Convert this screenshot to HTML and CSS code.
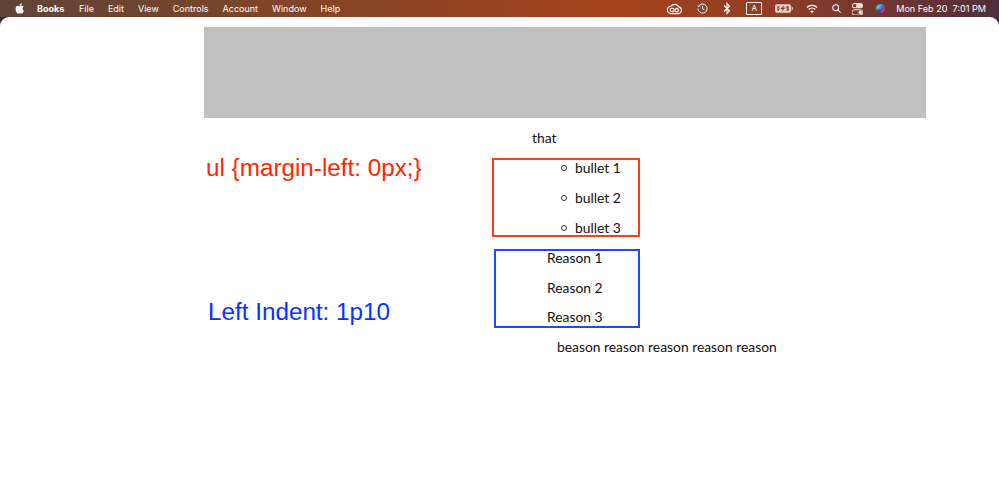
FILE: index.html
```html
<!DOCTYPE html>
<html lang="en">
<head>
    <meta charset="UTF-8">
    <meta name="viewport" content="width=device-width, initial-scale=1.0">
    <title>Books</title>
    <link rel="stylesheet" href="styles.css">
</head>
<body>
    <header class="menubar">
        <nav class="menu">
            <svg class="apple" width="12" height="13" viewBox="0 0 24 24"><path fill="#fff" d="M17.05 12.54c-.03-2.6 2.12-3.85 2.22-3.91-1.21-1.77-3.09-2.01-3.76-2.04-1.6-.16-3.12.94-3.93.94-.81 0-2.06-.92-3.39-.89-1.74.03-3.35 1.01-4.25 2.57-1.81 3.14-.46 7.79 1.3 10.34.86 1.25 1.89 2.65 3.24 2.6 1.3-.05 1.79-.84 3.36-.84 1.57 0 2.01.84 3.39.81 1.4-.02 2.28-1.27 3.14-2.53.99-1.45 1.4-2.86 1.42-2.93-.03-.01-2.71-1.04-2.74-4.12zM14.47 4.9c.72-.87 1.2-2.08 1.07-3.28-1.03.04-2.28.69-3.02 1.55-.66.77-1.24 2-1.09 3.18 1.15.09 2.32-.58 3.04-1.45z"/></svg>
            <span class="menu-item menu-app">Books</span>
            <span class="menu-item">File</span>
            <span class="menu-item">Edit</span>
            <span class="menu-item">View</span>
            <span class="menu-item">Controls</span>
            <span class="menu-item">Account</span>
            <span class="menu-item">Window</span>
            <span class="menu-item">Help</span>
        </nav>
        <div class="status">
            <!-- creative cloud -->
            <svg class="wide" width="15" height="12" viewBox="0 0 16 13" fill="none" stroke="#fff"><path stroke-width="1.2" d="M4.5 11.5a4 4 0 0 1-.4-8A5 5 0 0 1 12.6 4.2a3.7 3.7 0 0 1-.6 7.3z"/><path stroke-width="1.3" d="M8.5 7.6C7.6 6.4 6.6 5.7 5.4 5.7a2 2 0 0 0 0 4c2 0 3-3.9 5.2-3.9a2 2 0 0 1 0 3.9c-.9 0-1.600-.4-2.200-1.100"/></svg>
            <!-- time machine -->
            <svg class="wide" width="11" height="11" viewBox="0 0 12 12" fill="none" stroke="#fff" stroke-width="1"><path d="M1.700 3.500A5 5 0 1 1 1 6"/><path d="M.6 3.200l1.300 1 1-1.300"/><path d="M6 3v3.200l2 1.100"/></svg>
            <!-- bluetooth -->
            <svg class="wide" width="8" height="13" viewBox="0 0 8 13" fill="none" stroke="#fff" stroke-width="1.1"><path d="M1 3.500l5.500 5.300L4 11.500v-10l2.500 2.700L1 9.500"/></svg>
            <span class="input-box">A</span>
            <!-- battery -->
            <svg width="18" height="9" viewBox="0 0 19 9"><rect width="17" height="9" rx="2" fill="#e3d3cb"/><rect x="17.500" y="3" width="1.500" height="3" rx=".7" fill="#d8c4ba"/><path fill="#8a4527" d="M9.500 1L5.500 5h2.300L7 8l4-4.200H8.800zM2.500 2h2.800l-2 2.500H5L4 7H2.500zM12 2h2.500v5h-3l2-2.500H12z"/></svg>
            <!-- wifi -->
            <svg class="wifi" width="12" height="10" viewBox="0 0 14 11" fill="none" stroke="#fff" stroke-width="1.500"><path d="M1 3.800a8.600 8.600 0 0 1 12 0"/><path d="M3.200 6.100a5.400 5.400 0 0 1 7.600 0"/><path fill="#fff" stroke="none" d="M7 10.500L4.900 8.200a3 3 0 0 1 4.200 0z"/></svg>
            <!-- search -->
            <svg class="search" width="9" height="9" viewBox="0 0 11 11" fill="none" stroke="#fff" stroke-width="1.300"><circle cx="4.500" cy="4.500" r="3.600"/><path d="M7.200 7.200L10.500 10.500"/></svg>
            <!-- control centre -->
            <svg width="11" height="12" viewBox="0 0 11 12"><rect width="11" height="5.300" rx="2.600" fill="#e8dcd6"/><circle cx="2.700" cy="2.650" r="1.700" fill="#6b3a2a"/><rect y="6.700" width="11" height="5.300" rx="2.600" fill="none" stroke="#e8dcd6"/><circle cx="8.300" cy="9.350" r="1.900" fill="#e8dcd6"/></svg>
            <!-- siri -->
            <span class="siri"></span>
            <span class="clock"><span>Mon Feb 20</span><span>7:01 PM</span></span>
        </div>
    </header>

    <main class="window">
        <div class="banner"></div>

        <div class="book-text">
            <p class="that">that</p>
            <ul class="bullets">
                <li>bullet 1</li>
                <li>bullet 2</li>
                <li>bullet 3</li>
            </ul>
            <div class="reasons">
                <p>Reason 1</p>
                <p>Reason 2</p>
                <p>Reason 3</p>
            </div>
            <p class="beason">beason reason reason reason reason</p>

            <div class="note-box box-red"></div>
            <div class="note-box box-blue"></div>
        </div>

        <span class="note note-red">ul {margin-left: 0px;}</span>
        <span class="note note-blue">Left Indent: 1p10</span>
    </main>
</body>
</html>
```

FILE: styles.css
```css
html, body {
    margin: 0;
    height: 100%;
}
body {
    background: #3a2a3c;
    overflow: hidden;
    font-family: Lato, sans-serif;
    color: #111;
}
.menubar {
    height: 17px;
    display: flex;
    justify-content: space-between;
    align-items: center;
    padding: 0 13px 0 14px;
    color: #fff;
    font-family: Inter, sans-serif;
    font-size: 9px;
    background: linear-gradient(90deg, #5f4338 0%, #7c4528 25%, #a5421b 62%, #8e3d25 78%, #4f2e3c 100%);
}
.menu, .status {
    display: flex;
    align-items: center;
}
.apple {
    margin-right: 11px;
}
.menu-item {
    margin-right: 14px;
}
.menu-app {
    font-weight: 700;
    margin-right: 14.7px;
}
.status {
    gap: 13px;
}
.wide {
    margin-right: 2px;
}
.wifi {
    margin-right: 1px;
}
.search {
    margin-right: -2px;
}
.input-box {
    width: 14px;
    height: 11px;
    border: 1px solid #eee;
    border-radius: 1px;
    text-align: center;
    line-height: 11px;
    font-size: 8px;
}
.siri {
    width: 9px;
    height: 9px;
    border-radius: 50%;
    background: conic-gradient(#3fa4d8, #7a3fb0, #c53c7c, #2a3f8f, #3fd0c0, #3fa4d8);
}
.clock {
    display: flex;
    gap: 5px;
    margin-left: -2px;
    font-size: 9.1px;
}
.window {
    position: relative;
    height: 463px;
    background: #fff;
    border-radius: 9px 9px 0 0;
    padding-top: 10px;
    box-sizing: border-box;
}
.banner {
    height: 91px;
    margin: 0 73.5px 0 204px;
    background: #c0c0c0;
}
.book-text {
    position: relative;
    margin: 5px 0 0 532px;
    font-size: 13.85px;
    line-height: 29.9px;
}
.book-text p {
    margin: 0;
}
.bullets {
    list-style: none;
    margin: 0;
    padding-left: 43px;
}
.bullets li {
    position: relative;
}
.bullets li::before {
    content: "";
    position: absolute;
    left: -14px;
    top: 12px;
    width: 4px;
    height: 4px;
    border: 1px solid #333;
    border-radius: 50%;
}
.reasons {
    padding-left: 15px;
}
.beason {
    padding-left: 25px;
}
.note-box {
    position: absolute;
    box-sizing: border-box;
    height: 79px;
    border: 2px solid;
}
.box-red {
    left: -40px;
    top: 35px;
    width: 148px;
    border-color: #ff3b1f;
}
.box-blue {
    left: -38px;
    top: 126px;
    width: 146px;
    border-color: #1f48ff;
}
.note {
    position: absolute;
    font-family: "Liberation Sans", Arial, sans-serif;
    font-size: 24.25px;
    line-height: 28px;
    white-space: nowrap;
}
.note-red {
    left: 206px;
    top: 137px;
    color: #ff2600;
}
.note-blue {
    left: 208px;
    top: 281px;
    color: #0433ff;
}
```
